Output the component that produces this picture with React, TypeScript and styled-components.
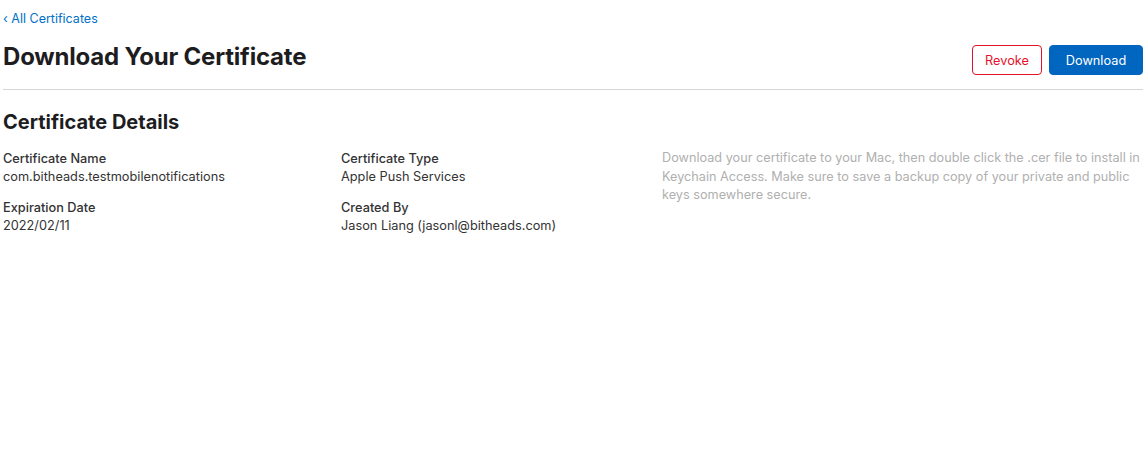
import React from "react";
import styled, { createGlobalStyle } from "styled-components";

const Global = createGlobalStyle`
  html, body { margin: 0; padding: 0; background: #fff; }
  body { font-family: Inter, "Noto Sans", "Liberation Sans", sans-serif; color: #1d1d1f; -webkit-font-smoothing: antialiased; }
`;

const Page = styled.div`
  padding: 10px 5px 0 3px;
  display: flex;
  flex-direction: column;
`;

const BackLink = styled.a`
  font-size: 12.5px;
  color: #0070c9;
  text-decoration: none;
  line-height: 18px;
  display: flex;
  align-items: center;
  gap: 4px;
`;

const Header = styled.div`
  display: flex;
  justify-content: space-between;
  align-items: flex-end;
  padding: 13px 0 14px;
  border-bottom: 1px solid #d6d6d6;
`;

const Title = styled.h1`
  margin: 0 0 2px;
  font-size: 24px;
  font-weight: 700;
  line-height: 32px;
  letter-spacing: -0.2px;
  color: #1d1d1f;
`;

const Actions = styled.div`
  display: flex;
  gap: 7px;
`;

const Button = styled.button<{ $variant: "danger" | "primary" }>`
  font-family: inherit;
  font-size: 12.75px;
  height: 30px;
  border-radius: 4px;
  cursor: pointer;
  padding: 0;
  border: 1px solid ${(p) => (p.$variant === "danger" ? "#e3102c" : "#0066c0")};
  background: ${(p) => (p.$variant === "danger" ? "#fff" : "#0066c0")};
  color: ${(p) => (p.$variant === "danger" ? "#e3102c" : "#fff")};
  width: ${(p) => (p.$variant === "danger" ? "70px" : "94px")};
`;

const SectionTitle = styled.h2`
  margin: 19px 0 0;
  font-size: 20px;
  font-weight: 700;
  line-height: 26px;
  color: #1d1d1f;
`;

const Grid = styled.div`
  display: grid;
  grid-template-columns: 338px 321px 1fr;
  margin-top: 15px;
`;

const Column = styled.div`
  display: flex;
  flex-direction: column;
  gap: 13px;
`;

const Field = styled.div`
  display: flex;
  flex-direction: column;
`;

const Label = styled.div`
  font-size: 12.75px;
  font-weight: 500;
  line-height: 18px;
  color: #333;
`;

const Value = styled.div`
  font-size: 12.75px;
  line-height: 18px;
  color: #333;
`;

const Note = styled.p`
  margin: -1px 0 0;
  font-size: 12.7px;
  line-height: 18.5px;
  color: #b0b0b0;
`;

export default function App() {
  return (
    <>
      <Global />
      <Page>
        <BackLink href="#">‹ All Certificates</BackLink>
        <Header>
          <Title>Download Your Certificate</Title>
          <Actions>
            <Button $variant="danger">Revoke</Button>
            <Button $variant="primary">Download</Button>
          </Actions>
        </Header>
        <SectionTitle>Certificate Details</SectionTitle>
        <Grid>
          <Column>
            <Field>
              <Label>Certificate Name</Label>
              <Value>com.bitheads.testmobilenotifications</Value>
            </Field>
            <Field>
              <Label>Expiration Date</Label>
              <Value>2022/02/11</Value>
            </Field>
          </Column>
          <Column>
            <Field>
              <Label>Certificate Type</Label>
              <Value>Apple Push Services</Value>
            </Field>
            <Field>
              <Label>Created By</Label>
              <Value>Jason Liang (jasonl@bitheads.com)</Value>
            </Field>
          </Column>
          <Note>
            Download your certificate to your Mac, then double click the .cer file to install in Keychain Access. Make sure to save a backup copy of your private and public keys somewhere secure.
          </Note>
        </Grid>
      </Page>
    </>
  );
}
